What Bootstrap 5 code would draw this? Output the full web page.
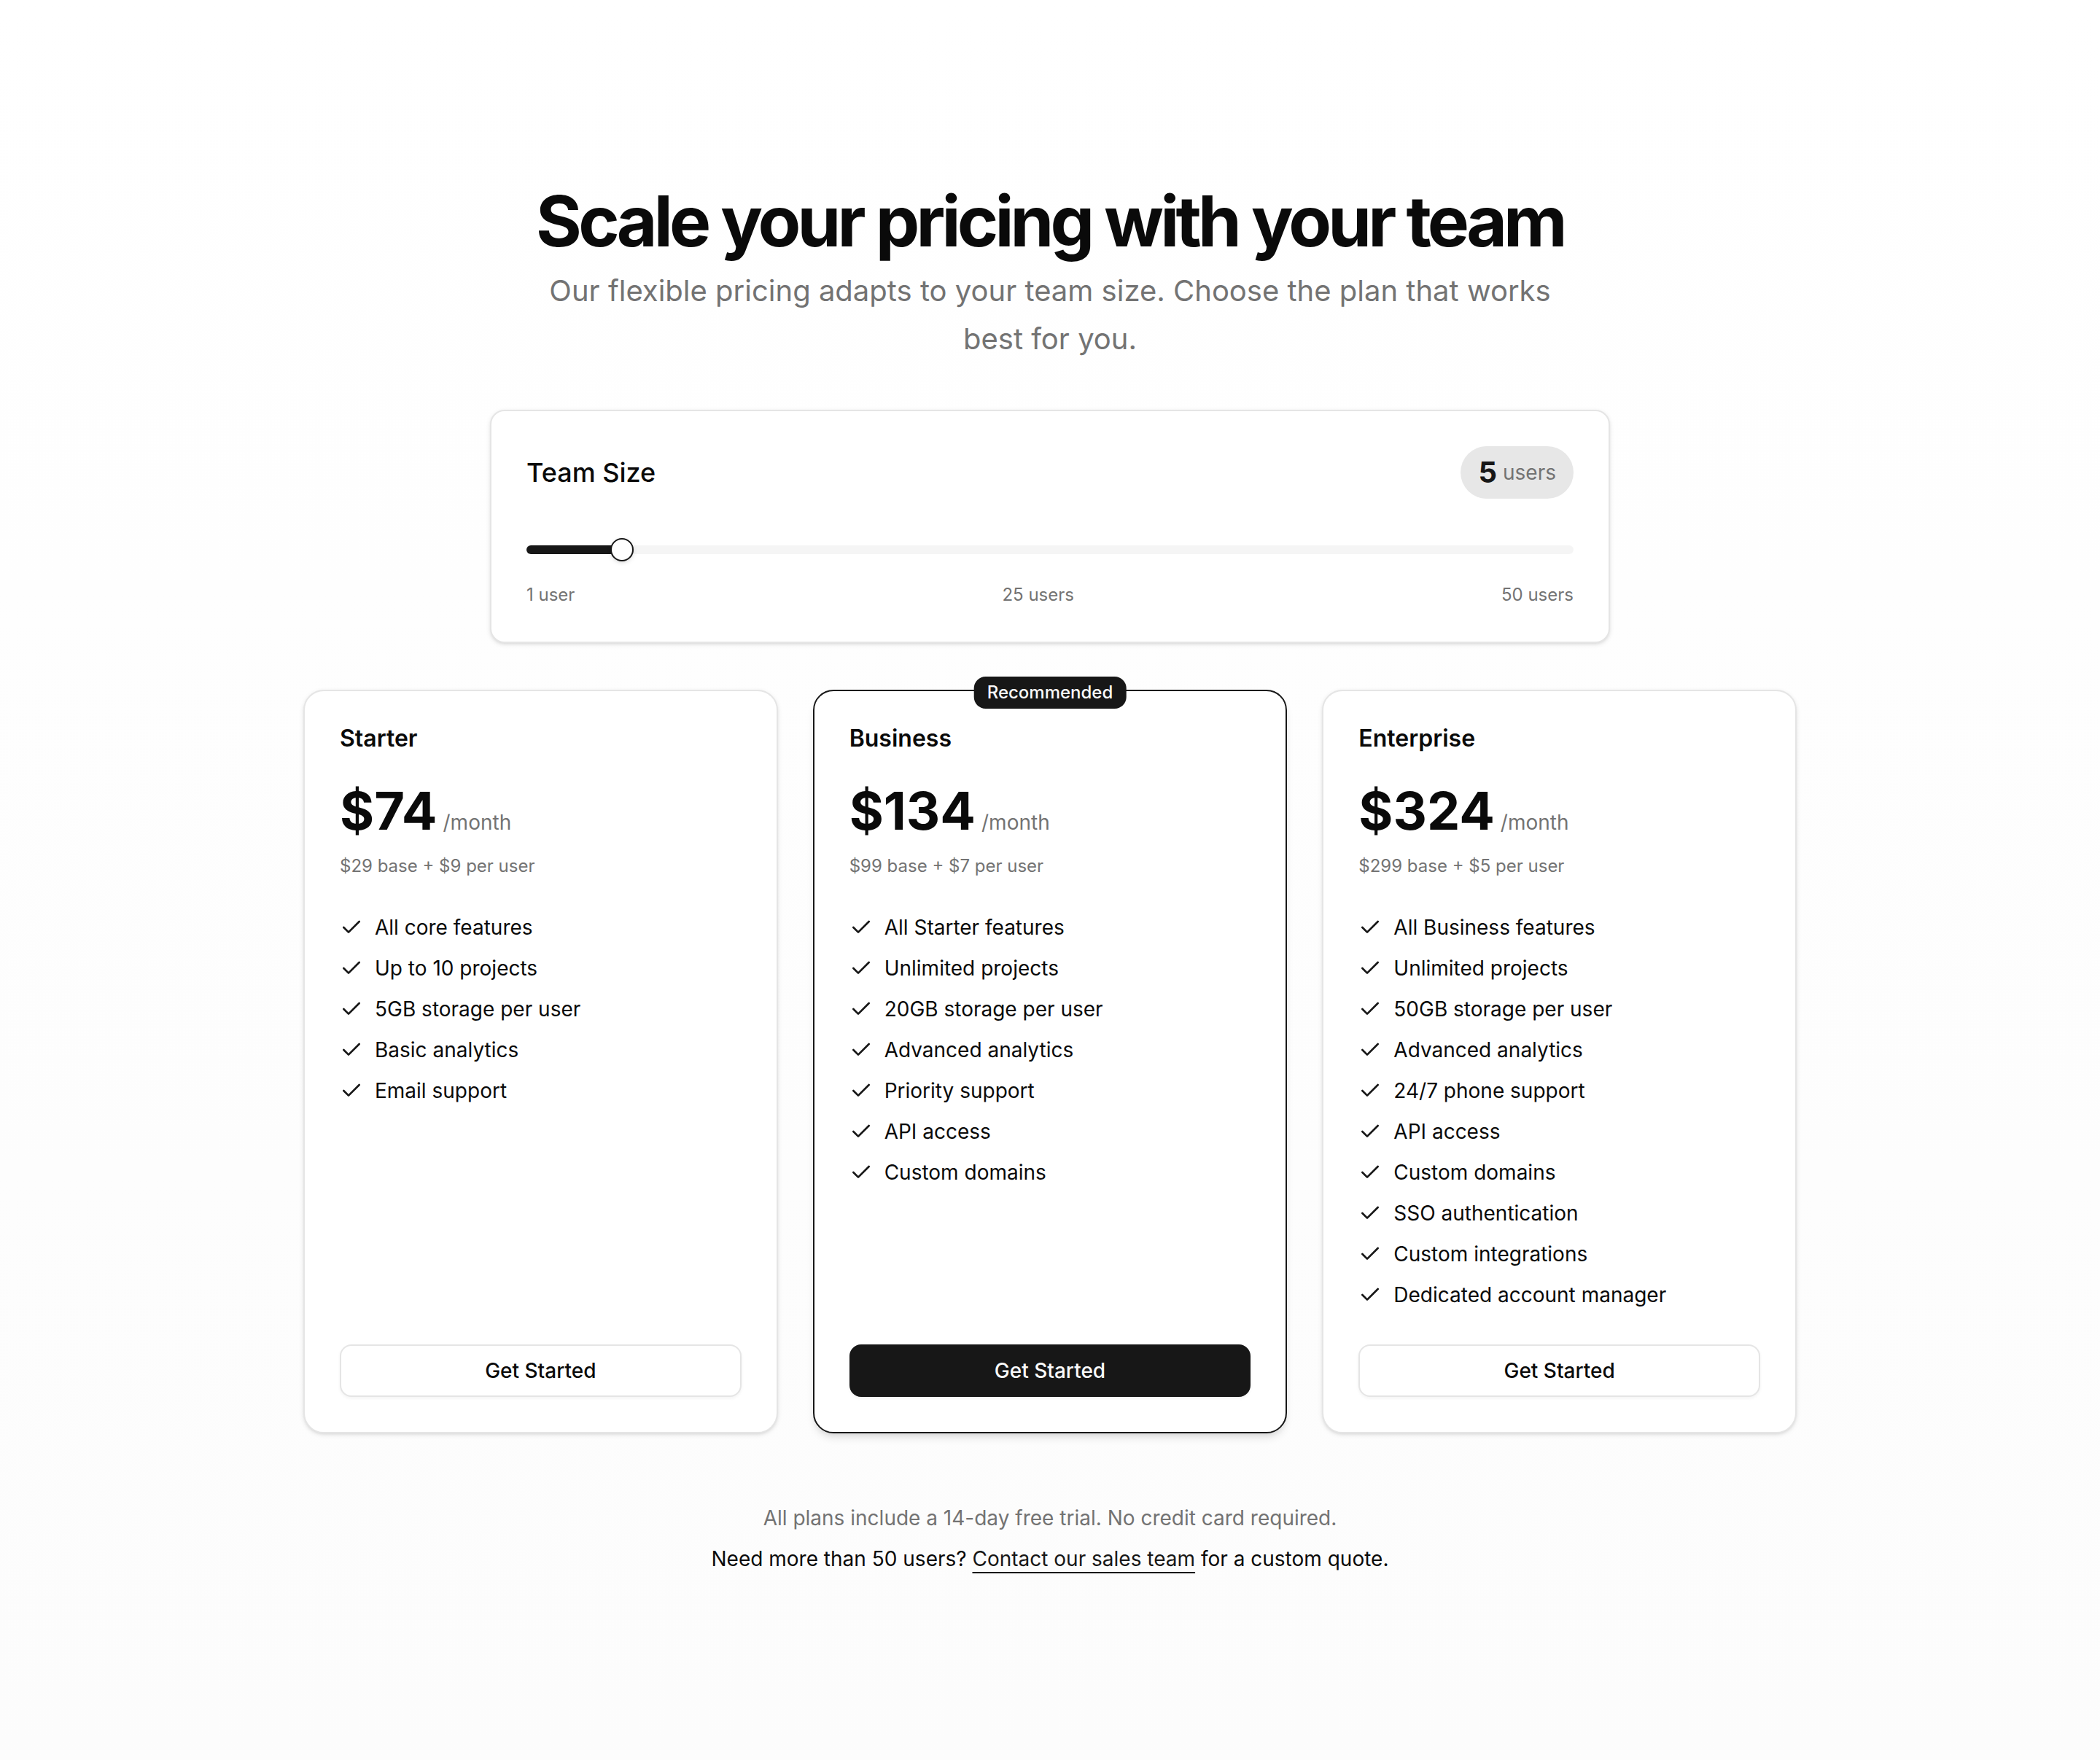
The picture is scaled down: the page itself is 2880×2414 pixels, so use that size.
<!DOCTYPE html>
<html lang="en">
<head>
<meta charset="utf-8">
<meta name="viewport" content="width=device-width, initial-scale=1">
<title>Pricing</title>
<link href="https://cdn.jsdelivr.net/npm/bootstrap@5.3.0/dist/css/bootstrap.min.css" rel="stylesheet">
<style>
  :root {
    --ink: #0a0a0a;
    --primary: #171717;
    --muted: #737373;
    --line: #e5e5e5;
  }
  body {
    font-family: Inter, "Liberation Sans", sans-serif;
    font-size: 28px;
    line-height: 40px;
    color: var(--ink);
    background: #fff;
  }
  .pricing-page {
    min-height: 100vh;
    padding: 256px 32px;
    background: linear-gradient(to bottom, #fff, #fcfcfc);
  }
  .pricing-wrap { max-width: 2048px; }
  .headline { font-size: 96px; line-height: 94px; letter-spacing: -0.05em; margin-bottom: 16px; }
  .intro { max-width: 1408px; font-size: 40px; line-height: 66px; margin-bottom: 64px; }
  .soft { color: var(--muted); }
  .tiny { font-size: 24px; line-height: 32px; }

  .panel {
    background: #fff;
    border: 2px solid var(--line);
    padding: 48px;
    box-shadow: 0 2px 6px rgba(0,0,0,.1), 0 2px 4px -2px rgba(0,0,0,.1);
  }
  .team-panel { max-width: 1536px; border-radius: 20px; margin-bottom: 64px; }
  .team-label { font-size: 36px; line-height: 56px; }
  .team-count { padding: 8px 24px; background: rgba(23,23,23,.1); gap: 8px; }
  .team-count strong { font-size: 40px; line-height: 56px; color: var(--primary); }

  .team-range { display: block; height: 32px; margin: 54px 0 30px; -webkit-appearance: none; appearance: none; background: transparent; }
  .team-range::-webkit-slider-runnable-track {
    height: 12px;
    border-radius: 6px;
    background: linear-gradient(to right, var(--primary) var(--fill), #f5f5f5 var(--fill));
  }
  .team-range::-webkit-slider-thumb {
    width: 32px; height: 32px; margin-top: -10px;
    background: #fff; border: 2px solid var(--primary);
    box-shadow: 0 2px 6px rgba(0,0,0,.1), 0 2px 4px -2px rgba(0,0,0,.1);
  }
  .team-range::-webkit-slider-thumb:active { background: #fff; }

  .plans { --bs-gutter-x: 48px; --bs-gutter-y: 0; }
  .plan { border-radius: 28px; }
  .plan-featured {
    border-color: var(--primary);
    box-shadow: 0 8px 12px -2px rgba(0,0,0,.1), 0 4px 8px -4px rgba(0,0,0,.1);
  }
  .plan-flag {
    top: -20px;
    padding: 6px 18px;
    font-size: 24px; line-height: 32px;
    background: var(--primary); color: #fafafa;
    border-radius: 16px;
  }
  .plan-name { font-size: 32px; line-height: 34px; margin-bottom: 46px; }
  .plan-price { gap: 8px; margin-bottom: 24px; }
  .plan-price strong { font-size: 72px; line-height: 72px; }
  .plan-features { margin: 48px 0; gap: 16px; }
  .plan-features li { gap: 16px; }
  .tick { width: 32px; height: 32px; flex: none; fill: none; stroke: var(--primary); stroke-width: 2; stroke-linecap: round; stroke-linejoin: round; }
  .plan-btn {
    height: 72px;
    padding: 0 32px;
    font-size: 28px; line-height: 40px; font-weight: 500;
    border: 2px solid var(--line); border-radius: 16px;
    background: #fff; color: var(--ink);
    box-shadow: 0 2px 4px rgba(0,0,0,.05);
  }
  .plan-btn:hover { background: #f5f5f5; border-color: var(--line); color: var(--ink); }
  .plan-btn-solid, .plan-btn-solid:hover { background: var(--primary); border-color: var(--primary); color: #fafafa; }

  .closing { margin-top: 96px; gap: 16px; }
  .sales-link { color: var(--primary); text-decoration: underline 2px; text-underline-offset: 8px; }
</style>
</head>
<body>
<svg class="d-none" aria-hidden="true"><symbol id="check" viewBox="0 0 24 24"><path d="M20 6 9 17l-5-5"/></symbol></svg>
<main class="pricing-page">
  <div class="pricing-wrap mx-auto">
    <header class="text-center">
      <h1 class="headline fw-bold">Scale your pricing with your team</h1>
      <p class="intro soft mx-auto">Our flexible pricing adapts to your team size. Choose the plan that works best for you.</p>
    </header>

    <section class="panel team-panel mx-auto">
      <div class="d-flex justify-content-between align-items-center">
        <label class="team-label fw-medium" for="team-size">Team Size</label>
        <div class="team-count rounded-pill d-flex align-items-center">
          <strong id="team-value">5</strong><span class="soft">users</span>
        </div>
      </div>
      <input type="range" class="form-range team-range" id="team-size" min="1" max="50" value="5" style="--fill: 9.1%">
      <div class="d-flex justify-content-between tiny soft">
        <span>1 user</span><span>25 users</span><span>50 users</span>
      </div>
    </section>

    <section class="row row-cols-1 row-cols-lg-3 plans">
      <div class="col">
        <article class="panel plan h-100 d-flex flex-column">
          <h2 class="plan-name fw-semibold">Starter</h2>
          <div class="plan-price d-flex align-items-baseline"><strong data-base="29" data-seat="9">$74</strong><span class="soft">/month</span></div>
          <div class="tiny soft">$29 base + $9 per user</div>
          <ul class="plan-features list-unstyled d-flex flex-column flex-grow-1">
            <li class="d-flex align-items-center"><svg class="tick"><use href="#check"/></svg>All core features</li>
            <li class="d-flex align-items-center"><svg class="tick"><use href="#check"/></svg>Up to 10 projects</li>
            <li class="d-flex align-items-center"><svg class="tick"><use href="#check"/></svg>5GB storage per user</li>
            <li class="d-flex align-items-center"><svg class="tick"><use href="#check"/></svg>Basic analytics</li>
            <li class="d-flex align-items-center"><svg class="tick"><use href="#check"/></svg>Email support</li>
          </ul>
          <button type="button" class="btn plan-btn w-100">Get Started</button>
        </article>
      </div>
      <div class="col">
        <article class="panel plan plan-featured h-100 d-flex flex-column position-relative">
          <span class="plan-flag fw-medium position-absolute start-50 translate-middle-x">Recommended</span>
          <h2 class="plan-name fw-semibold">Business</h2>
          <div class="plan-price d-flex align-items-baseline"><strong data-base="99" data-seat="7">$134</strong><span class="soft">/month</span></div>
          <div class="tiny soft">$99 base + $7 per user</div>
          <ul class="plan-features list-unstyled d-flex flex-column flex-grow-1">
            <li class="d-flex align-items-center"><svg class="tick"><use href="#check"/></svg>All Starter features</li>
            <li class="d-flex align-items-center"><svg class="tick"><use href="#check"/></svg>Unlimited projects</li>
            <li class="d-flex align-items-center"><svg class="tick"><use href="#check"/></svg>20GB storage per user</li>
            <li class="d-flex align-items-center"><svg class="tick"><use href="#check"/></svg>Advanced analytics</li>
            <li class="d-flex align-items-center"><svg class="tick"><use href="#check"/></svg>Priority support</li>
            <li class="d-flex align-items-center"><svg class="tick"><use href="#check"/></svg>API access</li>
            <li class="d-flex align-items-center"><svg class="tick"><use href="#check"/></svg>Custom domains</li>
          </ul>
          <button type="button" class="btn plan-btn plan-btn-solid w-100">Get Started</button>
        </article>
      </div>
      <div class="col">
        <article class="panel plan h-100 d-flex flex-column">
          <h2 class="plan-name fw-semibold">Enterprise</h2>
          <div class="plan-price d-flex align-items-baseline"><strong data-base="299" data-seat="5">$324</strong><span class="soft">/month</span></div>
          <div class="tiny soft">$299 base + $5 per user</div>
          <ul class="plan-features list-unstyled d-flex flex-column flex-grow-1">
            <li class="d-flex align-items-center"><svg class="tick"><use href="#check"/></svg>All Business features</li>
            <li class="d-flex align-items-center"><svg class="tick"><use href="#check"/></svg>Unlimited projects</li>
            <li class="d-flex align-items-center"><svg class="tick"><use href="#check"/></svg>50GB storage per user</li>
            <li class="d-flex align-items-center"><svg class="tick"><use href="#check"/></svg>Advanced analytics</li>
            <li class="d-flex align-items-center"><svg class="tick"><use href="#check"/></svg>24/7 phone support</li>
            <li class="d-flex align-items-center"><svg class="tick"><use href="#check"/></svg>API access</li>
            <li class="d-flex align-items-center"><svg class="tick"><use href="#check"/></svg>Custom domains</li>
            <li class="d-flex align-items-center"><svg class="tick"><use href="#check"/></svg>SSO authentication</li>
            <li class="d-flex align-items-center"><svg class="tick"><use href="#check"/></svg>Custom integrations</li>
            <li class="d-flex align-items-center"><svg class="tick"><use href="#check"/></svg>Dedicated account manager</li>
          </ul>
          <button type="button" class="btn plan-btn w-100">Get Started</button>
        </article>
      </div>
    </section>

    <footer class="closing text-center d-flex flex-column">
      <p class="soft mb-0">All plans include a 14-day free trial. No credit card required.</p>
      <p class="mb-0">Need more than 50 users? <a class="sales-link" href="#sales">Contact our sales team</a> for a custom quote.</p>
    </footer>
  </div>
</main>
<script src="https://cdn.jsdelivr.net/npm/bootstrap@5.3.0/dist/js/bootstrap.bundle.min.js"></script>
<script>
  // Recalculate the prices when the team size changes.
  const range = document.getElementById('team-size');
  range.addEventListener('input', () => {
    const users = Number(range.value);
    const ratio = (users - 1) / 49;
    range.style.setProperty('--fill', `calc(16px + (100% - 32px) * ${ratio})`);
    document.getElementById('team-value').textContent = users;
    document.querySelectorAll('[data-base]').forEach(el => {
      el.textContent = '$' + (Number(el.dataset.base) + users * Number(el.dataset.seat));
    });
  });
</script>
</body>
</html>
